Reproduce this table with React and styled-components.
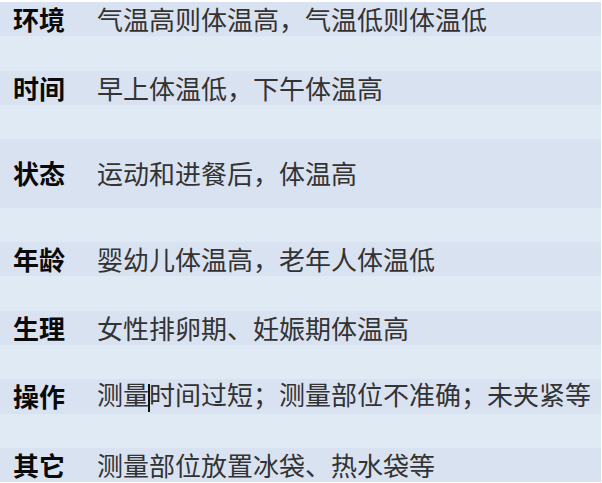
import React from "react";
import styled, { createGlobalStyle } from "styled-components";

const GlobalStyle = createGlobalStyle`
  html, body {
    margin: 0;
    padding: 0;
    background: #ffffff;
  }
`;

const Table = styled.div`
  width: 601px;
  padding-top: 2px;
  display: flex;
  flex-direction: column;
  font-family: "Noto Sans CJK SC", "Noto Sans", sans-serif;
`;

const Band = styled.div`
  height: ${(p) => (p.tall ? 68.6 : 34.3)}px;
  background: ${(p) => (p.light ? "#e0eaf5" : "#d9e2f1")};
  display: flex;
  align-items: center;
  padding-left: 13px;
  box-sizing: border-box;
`;

const Label = styled.span`
  width: 84px;
  flex: none;
  font-size: 26px;
  font-weight: 700;
  color: #0a0a0a;
  line-height: 1;
`;

const Text = styled.span`
  font-size: 26px;
  font-weight: 400;
  color: #333333;
  line-height: 1;
  white-space: nowrap;
`;

const Caret = styled.span`
  display: inline-block;
  width: 1.5px;
  height: 28px;
  margin: 0 -0.75px;
  background: #111111;
  vertical-align: middle;
`;

const rows = [
  { label: "环境", text: "气温高则体温高，气温低则体温低" },
  { label: "时间", text: "早上体温低，下午体温高" },
  { label: "状态", text: "运动和进餐后，体温高", tall: true },
  { label: "年龄", text: "婴幼儿体温高，老年人体温低" },
  { label: "生理", text: "女性排卵期、妊娠期体温高" },
  { label: "操作", text: "测量时间过短；测量部位不准确；未夹紧等", caret: 2 },
  { label: "其它", text: "测量部位放置冰袋、热水袋等" },
];

export default function App() {
  return (
    <>
      <GlobalStyle />
      <Table>
        {rows.map((r, i) => (
          <React.Fragment key={r.label}>
            <Band tall={r.tall}>
              <Label>{r.label}</Label>
              <Text>
                {r.caret ? (
                  <>
                    {r.text.slice(0, r.caret)}
                    <Caret />
                    {r.text.slice(r.caret)}
                  </>
                ) : (
                  r.text
                )}
              </Text>
            </Band>
            {i < rows.length - 1 && <Band light />}
          </React.Fragment>
        ))}
      </Table>
    </>
  );
}
